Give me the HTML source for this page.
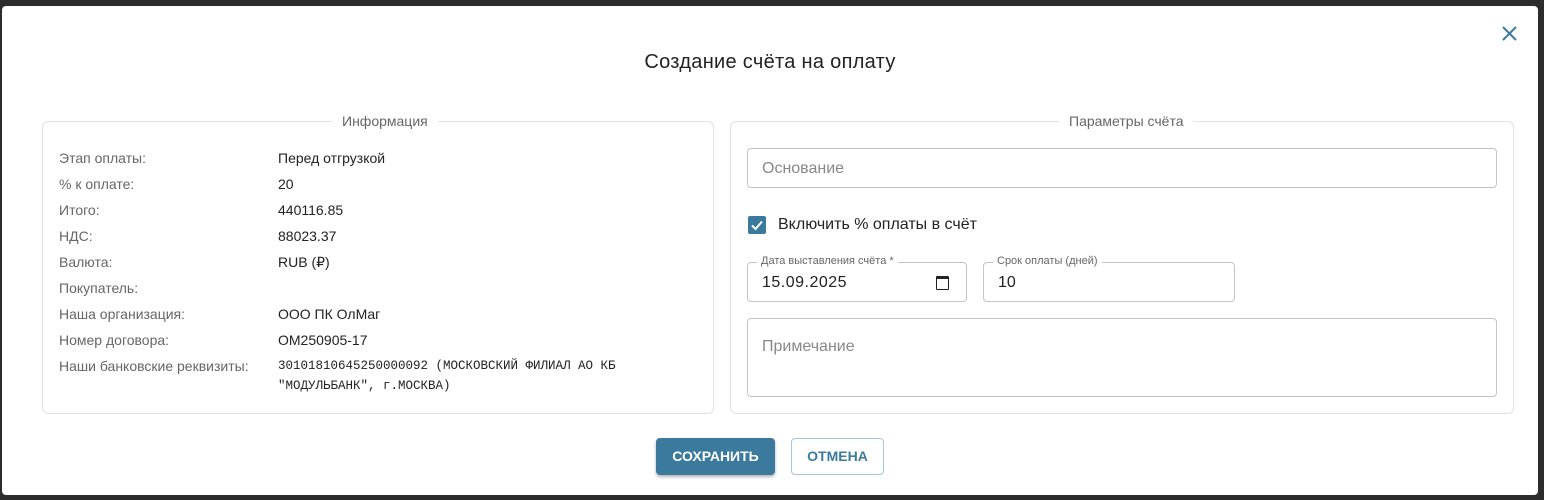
<!DOCTYPE html><html><head><meta charset="utf-8"><style>
body{margin:0;width:1544px;height:500px;background:#2c2c2c;font-family:"Liberation Sans",sans-serif;overflow:hidden;position:relative}
.m{position:absolute;left:2px;top:6px;width:1536px;height:489px;background:#fff;border-radius:4px}
.t{position:absolute;top:51px;left:0;width:1540px;text-align:center;font-size:20px;color:#222;letter-spacing:0.3px}
.x{position:absolute;left:1502px;top:26px}
.fs{position:absolute;border:1px solid #e2e2e2;border-radius:6px}
.lg{position:absolute;top:-9px;background:#fff;padding:0 10px;font-size:14px;color:#666}
.r{position:absolute;left:16px;font-size:14px;color:#666}
.v{position:absolute;left:235px;font-size:14px;color:#222;white-space:nowrap}
.mono{font-family:"Liberation Mono",monospace;font-size:12.5px;line-height:20px}
.in{position:absolute;border:1px solid #c4c4c4;border-radius:4px;background:#fff}
.ph{position:absolute;left:14px;font-size:16px;color:#888}
.fl{position:absolute;top:-8px;left:9px;background:#fff;padding:0 4px;font-size:11px;color:#666}
.btn{position:absolute;top:438px;height:37px;border-radius:4px;font-size:14px;font-weight:bold;line-height:37px;text-align:center}
</style></head><body><div class="m"></div>
<div class="t">Создание счёта на оплату</div>
<svg class="x" width="15" height="15" viewBox="0 0 15 15"><path d="M1 1L14 14M14 1L1 14" stroke="#3b7a9c" stroke-width="2"/></svg>
<div class="fs" style="left:42px;top:121px;width:670px;height:291px">
<div class="lg" style="left:289px">Информация</div>
<div class="r" style="top:28px">Этап оплаты:</div><div class="v" style="top:28px">Перед отгрузкой</div>
<div class="r" style="top:54px">% к оплате:</div><div class="v" style="top:54px">20</div>
<div class="r" style="top:80px">Итого:</div><div class="v" style="top:80px">440116.85</div>
<div class="r" style="top:106px">НДС:</div><div class="v" style="top:106px">88023.37</div>
<div class="r" style="top:132px">Валюта:</div><div class="v" style="top:132px">RUB (₽)</div>
<div class="r" style="top:158px">Покупатель:</div>
<div class="r" style="top:184px">Наша организация:</div><div class="v" style="top:184px">ООО ПК ОлМаг</div>
<div class="r" style="top:210px">Номер договора:</div><div class="v" style="top:210px">ОМ250905-17</div>
<div class="r" style="top:236px">Наши банковские реквизиты:</div><div class="v mono" style="top:234px">30101810645250000092 (МОСКОВСКИЙ ФИЛИАЛ АО КБ<br>"МОДУЛЬБАНК", г.МОСКВА)</div>
</div>
<div class="fs" style="left:730px;top:121px;width:782px;height:291px">
<div class="lg" style="left:328px">Параметры счёта</div>
</div>
<div class="in" style="left:747px;top:148px;width:748px;height:38px"><div class="ph" style="top:11px">Основание</div></div>
<div style="position:absolute;left:748px;top:216px;width:18px;height:18px;background:#3b7a9c;border-radius:2px"><svg width="18" height="18"><path d="M4 9.5L7.5 13L14 5.5" stroke="#fff" stroke-width="2" fill="none"/></svg></div>
<div style="position:absolute;left:778px;top:216px;font-size:16px;color:#222">Включить % оплаты в счёт</div>
<div class="in" style="left:747px;top:262px;width:218px;height:38px"><div class="fl">Дата выставления счёта *</div><div style="position:absolute;left:14px;top:11px;font-size:16px;color:#222;letter-spacing:0.5px">15.09.2025</div>
<div style="position:absolute;left:188px;top:13px;width:11px;height:10px;border:1.5px solid #222;border-top-width:3px;border-radius:1px"></div></div>
<div class="in" style="left:983px;top:262px;width:250px;height:38px"><div class="fl">Срок оплаты (дней)</div><div style="position:absolute;left:14px;top:11px;font-size:16px;color:#222">10</div></div>
<div class="in" style="left:747px;top:318px;width:748px;height:77px"><div class="ph" style="top:19px">Примечание</div></div>
<div class="btn" style="left:656px;width:119px;background:#3b7a9c;color:#fff;box-shadow:0 2px 3px rgba(0,0,0,.3)">СОХРАНИТЬ</div>
<div class="btn" style="left:791px;width:91px;border:1px solid #a9c6d6;color:#3b7a9c;height:35px;line-height:35px">ОТМЕНА</div>
</body></html>
